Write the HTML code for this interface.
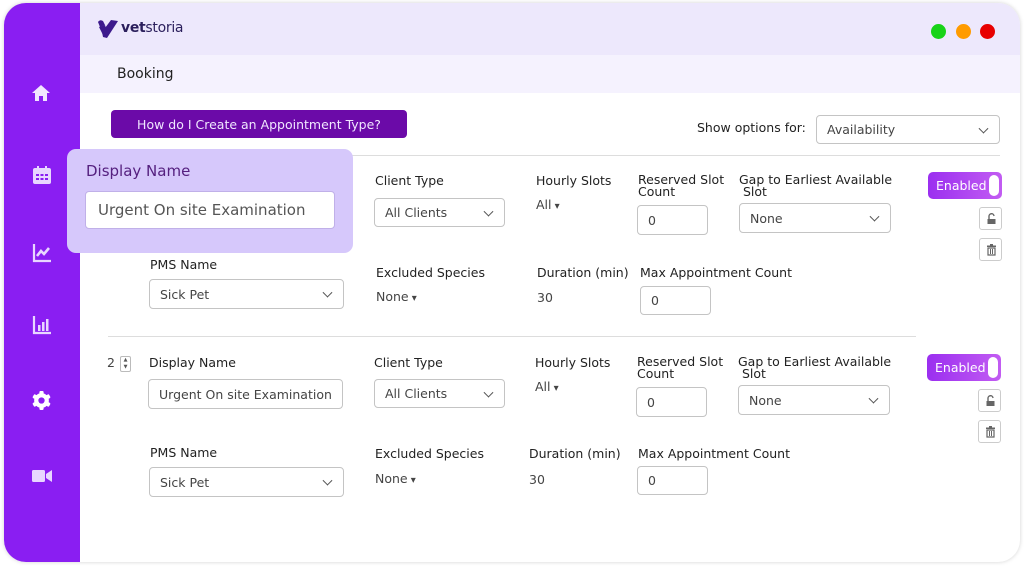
<!DOCTYPE html><html><head><style>
*{box-sizing:border-box;margin:0;padding:0}
body{width:1024px;height:567px;background:#fff;font-family:"DejaVu Sans","Liberation Sans",sans-serif;position:relative;overflow:hidden;color:#222}
.frame{position:absolute;left:4px;top:3px;width:1016px;height:559px;border-radius:22px;background:#fff;box-shadow:0 0 4px rgba(0,0,0,.18);overflow:hidden}
.side{position:absolute;left:0;top:0;width:76px;height:559px;background:#8a1ef2}
.hdr{position:absolute;left:76px;top:0;right:0;height:52px;background:#ede8fc}
.bk{position:absolute;left:76px;top:52px;right:0;height:38px;background:#f5f2fe}
.a{position:absolute;white-space:nowrap}
.lbl{font-size:12.5px;color:#222}
.in{position:absolute;border:1px solid #c4c4c4;border-radius:4px;background:#fff;font-size:12.5px;color:#444;padding-left:10px;display:flex;align-items:center}
.sel::after{content:"";position:absolute;right:12px;top:50%;width:6px;height:6px;border-right:1px solid #555;border-bottom:1px solid #555;transform:translateY(-70%) rotate(45deg)}
.dd{font-size:12.5px;color:#444}
.dd::after{content:"  ▾";font-size:10px}
.tog{position:absolute;width:74px;height:27px;border-radius:5px;background:linear-gradient(90deg,#9b2ff0,#c25cf2);color:#fff;font-size:12.5px;padding:6px 0 0 8px}
.tog::after{content:"";position:absolute;right:3px;top:3px;width:10px;height:21px;border-radius:5px;background:#fff}
.ib{position:absolute;width:23px;height:23px;border:1px solid #ccc;border-radius:3px;background:#fff}
.ib svg{position:absolute;left:6px;top:5px}
.dot{position:absolute;width:15px;height:15px;border-radius:50%;top:24px}
</style></head><body>
<div class="frame">
<div class="side"></div>
<div class="hdr"></div>
<div class="bk"></div>
</div>
<svg class="a" style="left:31px;top:83px" width="20" height="20" viewBox="0 0 20 20"><path d="M10 2 L19 10 H16 V18 H12 V13 H8 V18 H4 V10 H1Z" fill="#f1e6ff"/></svg>
<svg class="a" style="left:32px;top:165px" width="20" height="20" viewBox="0 0 20 20"><rect x="1" y="3" width="18" height="16" rx="2" fill="#e8d6ff"/><rect x="5" y="1" width="2" height="4" fill="#e8d6ff"/><rect x="13" y="1" width="2" height="4" fill="#e8d6ff"/><g fill="#8a1ef2"><rect x="4" y="9" width="3" height="2"/><rect x="8.5" y="9" width="3" height="2"/><rect x="13" y="9" width="3" height="2"/><rect x="4" y="13" width="3" height="2"/><rect x="8.5" y="13" width="3" height="2"/><rect x="13" y="13" width="3" height="2"/></g></svg>
<svg class="a" style="left:32px;top:243px" width="20" height="20" viewBox="0 0 20 20"><path d="M2 1V18H19" stroke="#e8d6ff" stroke-width="2.2" fill="none"/><path d="M5 13L9 8L12 11L17 5" stroke="#e8d6ff" stroke-width="2.6" fill="none"/></svg>
<svg class="a" style="left:32px;top:315px" width="20" height="20" viewBox="0 0 20 20"><path d="M2 1V18H19" stroke="#e8d6ff" stroke-width="2.2" fill="none"/><g fill="#e8d6ff"><rect x="6" y="10" width="2.5" height="6"/><rect x="10" y="7" width="2.5" height="9"/><rect x="14" y="4" width="2.5" height="12"/></g></svg>
<svg class="a" style="left:31px;top:390px" width="21" height="21" viewBox="0 0 20 20"><g fill="#fff"><circle cx="10" cy="10" r="7"/><rect x="8" y="1" width="4" height="18" rx="1"/><rect x="8" y="1" width="4" height="18" rx="1" transform="rotate(60 10 10)"/><rect x="8" y="1" width="4" height="18" rx="1" transform="rotate(120 10 10)"/></g><circle cx="10" cy="10" r="3" fill="#8a1ef2"/></svg>
<svg class="a" style="left:32px;top:467px" width="20" height="18" viewBox="0 0 20 18"><rect x="0" y="3" width="13" height="12" rx="1.5" fill="#e8d6ff"/><path d="M14 7L20 3V15L14 11Z" fill="#e8d6ff"/></svg>
<svg class="a" style="left:97px;top:19px" width="22" height="20" viewBox="0 0 22 20"><path d="M1 3 Q3 0 6 2 L8 6 L3 8Z" fill="#3d1a8c"/><path d="M5 13 L14 1 L21 2 L10 19 L6 18Z" fill="#3d1a8c"/><path d="M2 8 L8 6 L10 12 L6 16Z" fill="#3d1a8c"/></svg>
<div class="a" style="left:121px;top:20px;font-size:14px;color:#2b1f5c;font-weight:bold;letter-spacing:-.3px">vet<span style="font-weight:normal">storia</span></div>
<div class="dot" style="left:931px;background:#18d318"></div>
<div class="dot" style="left:956px;background:#ff9b00"></div>
<div class="dot" style="left:980px;background:#e80000"></div>
<div class="a" style="left:117px;top:66px;font-size:14px">Booking</div>
<div class="a" style="left:111px;top:110px;width:296px;height:28px;background:#6b0aa8;border-radius:4px;color:#f0e6ff;font-size:12.5px;text-align:center;line-height:30px">How do I Create an Appointment Type?</div>
<div class="a lbl" style="left:697px;top:120px">Show options for:</div>
<div class="in sel" style="left:816px;top:115px;width:184px;height:29px">Availability</div>
<div class="a" style="left:108px;top:155px;width:892px;height:1px;background:#ddd"></div>
<div class="a lbl" style="left:375px;top:173px">Client Type</div>
<div class="in sel" style="left:374px;top:198px;width:131px;height:29px">All Clients</div>
<div class="a lbl" style="left:536px;top:173px">Hourly Slots</div>
<div class="a dd" style="left:536px;top:197px">All</div>
<div class="a lbl" style="left:638px;top:174px;line-height:12px">Reserved Slot<br>Count</div>
<div class="in" style="left:637px;top:205px;width:71px;height:30px">0</div>
<div class="a lbl" style="left:739px;top:174px;line-height:12px">Gap to Earliest Available<br>&nbsp;Slot</div>
<div class="in sel" style="left:739px;top:203px;width:152px;height:30px">None</div>
<div class="tog" style="left:928px;top:172px">Enabled</div>
<div class="ib" style="left:979px;top:207px"><svg width="11" height="12" viewBox="0 0 11 12"><path d="M3 6V3.5A2.5 2.5 0 0 1 8 3" stroke="#666" stroke-width="1.4" fill="none"/><rect x="1.5" y="6" width="8" height="5" fill="#666"/></svg></div>
<div class="ib" style="left:979px;top:238px"><svg width="11" height="12" viewBox="0 0 11 12"><rect x="1" y="1.5" width="9" height="1.5" fill="#666"/><rect x="4" y="0" width="3" height="2" fill="#666"/><path d="M2 4H9V11H2Z" stroke="#666" stroke-width="1.2" fill="none"/><path d="M4.5 5V10M6.5 5V10" stroke="#666"/></svg></div>
<div class="a lbl" style="left:150px;top:257px">PMS Name</div>
<div class="in sel" style="left:149px;top:279px;width:195px;height:30px">Sick Pet</div>
<div class="a lbl" style="left:376px;top:265px">Excluded Species</div>
<div class="a dd" style="left:376px;top:289px">None</div>
<div class="a lbl" style="left:537px;top:265px">Duration (min)</div>
<div class="a" style="left:537px;top:290px;font-size:12.5px;color:#444">30</div>
<div class="a lbl" style="left:640px;top:265px">Max Appointment Count</div>
<div class="in" style="left:640px;top:286px;width:71px;height:29px">0</div>
<div class="a" style="left:108px;top:336px;width:808px;height:1px;background:#ddd"></div>
<div class="a" style="left:107px;top:355px;font-size:12.5px;color:#444">2</div>
<div class="a" style="left:120px;top:356px;width:11px;height:16px;border:1px solid #bbb;border-radius:2px;font-size:5px;line-height:7px;text-align:center;color:#555">▲<br>▼</div>
<div class="a lbl" style="left:149px;top:355px">Display Name</div>
<div class="in" style="left:148px;top:379px;width:195px;height:30px">Urgent On site Examination</div>
<div class="a lbl" style="left:374px;top:355px">Client Type</div>
<div class="in sel" style="left:374px;top:379px;width:131px;height:29px">All Clients</div>
<div class="a lbl" style="left:535px;top:355px">Hourly Slots</div>
<div class="a dd" style="left:535px;top:379px">All</div>
<div class="a lbl" style="left:637px;top:356px;line-height:12px">Reserved Slot<br>Count</div>
<div class="in" style="left:636px;top:387px;width:71px;height:30px">0</div>
<div class="a lbl" style="left:738px;top:356px;line-height:12px">Gap to Earliest Available<br>&nbsp;Slot</div>
<div class="in sel" style="left:738px;top:385px;width:152px;height:30px">None</div>
<div class="tog" style="left:927px;top:354px">Enabled</div>
<div class="ib" style="left:978px;top:389px"><svg width="11" height="12" viewBox="0 0 11 12"><path d="M3 6V3.5A2.5 2.5 0 0 1 8 3" stroke="#666" stroke-width="1.4" fill="none"/><rect x="1.5" y="6" width="8" height="5" fill="#666"/></svg></div>
<div class="ib" style="left:978px;top:420px"><svg width="11" height="12" viewBox="0 0 11 12"><rect x="1" y="1.5" width="9" height="1.5" fill="#666"/><rect x="4" y="0" width="3" height="2" fill="#666"/><path d="M2 4H9V11H2Z" stroke="#666" stroke-width="1.2" fill="none"/><path d="M4.5 5V10M6.5 5V10" stroke="#666"/></svg></div>
<div class="a lbl" style="left:150px;top:445px">PMS Name</div>
<div class="in sel" style="left:149px;top:467px;width:195px;height:30px">Sick Pet</div>
<div class="a lbl" style="left:375px;top:446px">Excluded Species</div>
<div class="a dd" style="left:375px;top:471px">None</div>
<div class="a lbl" style="left:529px;top:446px">Duration (min)</div>
<div class="a" style="left:529px;top:472px;font-size:12.5px;color:#444">30</div>
<div class="a lbl" style="left:638px;top:446px">Max Appointment Count</div>
<div class="in" style="left:637px;top:466px;width:71px;height:29px">0</div>
<div class="a" style="left:67px;top:149px;width:286px;height:104px;background:#d6c8fb;border-radius:9px"></div>
<div class="a" style="left:86px;top:162px;font-size:15px;color:#55207f">Display Name</div>
<div class="in" style="left:85px;top:191px;width:250px;height:38px;font-size:15px;color:#555;border-color:#c0b0e8;padding-left:12px">Urgent On site Examination</div>
</body></html>
